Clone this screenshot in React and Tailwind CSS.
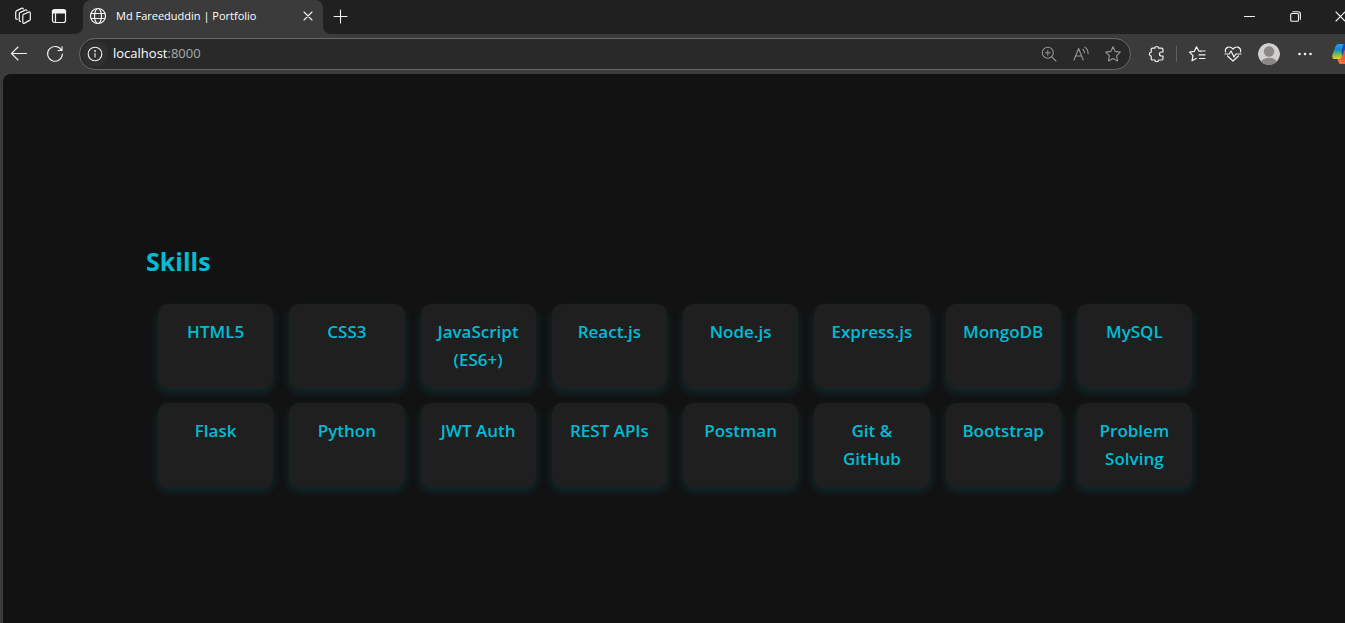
import React from "react";

const skills = [
  "HTML5", "CSS3", "JavaScript (ES6+)", "React.js", "Node.js", "Express.js", "MongoDB", "MySQL",
  "Flask", "Python", "JWT Auth", "REST APIs", "Postman", "Git & GitHub", "Bootstrap", "Problem Solving",
];

function Icon({ size = 20, stroke = 1.1, children }) {
  return (
    <svg width={size} height={size} viewBox={`0 0 ${size} ${size}`} fill="none" stroke="currentColor"
      strokeWidth={stroke} strokeLinecap="round" strokeLinejoin="round" aria-hidden="true" className="shrink-0">
      {children}
    </svg>
  );
}

function IconButton({ label, className = "", children }) {
  return (
    <button type="button" aria-label={label} className={`flex h-8 shrink-0 items-center justify-center ${className}`}>
      {children}
    </button>
  );
}

function TitleBar() {
  return (
    <header className="flex h-[34px] items-stretch bg-[#202020] text-[#f2f2f2]">
      <IconButton label="Workspaces" className="w-9 pl-2.5">
        <Icon stroke={1.2}>
          <path d="M10.300 8.500 15.700 6.100Q17.300 5.500 17.300 7.200v6q0 .8-.8 1.200l-4.900 2.700q-1.800.8-1.800-.9V9.700q0-.9.500-1.200" />
          <path d="M7.500 15.300Q6.300 15.400 6.300 14V7.900q0-.9.700-1.300l5.200-2.500q1.400-.6 1.800.6" />
          <path d="M4.300 13.200Q2.700 13.400 2.700 11.900V6.200q0-.9.700-1.300L8.500 2.400q1.400-.6 1.900.5" />
        </Icon>
      </IconButton>
      <IconButton label="Tab actions" className="w-[46px]">
        <Icon stroke={1.2}>
          <rect x="3.500" y="3.500" width="13" height="13" rx="2" />
          <path d="M3.500 4.500h13v2.500h-13z" fill="currentColor" />
          <path d="M6.500 7.500v9" />
        </Icon>
      </IconButton>
      <div className="relative ml-px flex h-8 w-60 items-center self-start rounded-t-lg bg-[#3b3b3b] pl-[5px] pr-[5px] shadow-[0_2px_0_#3b3b3b]">
        <svg className="absolute -bottom-0.5 -left-2" width="8" height="8" viewBox="0 0 8 8" aria-hidden="true">
          <path d="M8 0v8H0a8 8 0 0 0 8-8" fill="#3b3b3b" />
        </svg>
        <svg className="absolute -bottom-0.5 -right-2" width="8" height="8" viewBox="0 0 8 8" aria-hidden="true">
          <path d="M0 0v8h8a8 8 0 0 1-8-8" fill="#3b3b3b" />
        </svg>
        <Icon stroke={1.2}>
          <circle cx="10" cy="10" r="7.500" />
          <ellipse cx="10" cy="10" rx="3.500" ry="7.500" />
          <path d="M3.200 7.500h13.600M3.200 12.500h13.600" />
        </Icon>
        <span className="ml-2 flex-1 whitespace-nowrap text-[11px] text-white">Md Fareeduddin | Portfolio</span>
        <IconButton label="Close tab" className="w-5">
          <Icon size={10}><path d="M1 1l8 8M9 1 1 9" /></Icon>
        </IconButton>
      </div>
      <IconButton label="New tab" className="w-[34px]">
        <Icon size={15}><path d="M7.500 1v13M1 7.500h13" /></Icon>
      </IconButton>
      <div className="ml-auto flex overflow-hidden">
        <IconButton label="Minimize" className="w-[46px]">
          <Icon size={11} stroke={1}><path d="M.5 5.500h10" /></Icon>
        </IconButton>
        <IconButton label="Restore" className="w-[46px]">
          <Icon size={11} stroke={1.1}>
            <rect x=".7" y="2.500" width="7.800" height="7.800" rx="1" />
            <path d="M2.800.7h5.400q2.200 0 2.200 2.200v5.300" />
          </Icon>
        </IconButton>
        <IconButton label="Close window" className="-mr-[17px] w-11">
          <Icon size={11}><path d="M1 1l9 9M10 1l-9 9" /></Icon>
        </IconButton>
      </div>
    </header>
  );
}

function Toolbar() {
  return (
    <nav aria-label="Browser toolbar" className="flex h-10 items-center overflow-hidden bg-[#3b3b3b] pl-px text-[#f2f2f2]">
      <IconButton label="Back" className="w-9">
        <Icon><path d="M17.500 9.500H2.500M9 3 2.500 9.500 9 16" /></Icon>
      </IconButton>
      <IconButton label="Refresh" className="w-9">
        <Icon><path d="M16.600 6.500A7.400 7.400 0 1 0 17.400 10M17 2.500v4h-4" /></Icon>
      </IconButton>
      <div className="ml-1.5 flex h-8 flex-1 items-center rounded-full border border-[#686868] bg-[#292929] pl-0.5 pr-px">
        <IconButton label="Site information" className="w-[26px] rounded-full">
          <span className="flex size-[26px] items-center justify-center rounded-full bg-[#303030]">
            <Icon size={16} stroke={1.100}>
              <circle cx="8" cy="8" r="6.800" />
              <path d="M8 7.500v3.500" />
              <circle cx="8" cy="5" r=".4" />
            </Icon>
          </span>
        </IconButton>
        <a href="http://localhost:8000" className="ml-[5px] flex-1 text-[13px] text-white">
          localhost<span className="text-[#ababab]">:8000</span>
        </a>
        <div className="flex text-[#969696]">
          <IconButton label="Zoom" className="w-8">
            <Icon size={16}>
              <circle cx="6.800" cy="6.800" r="5.500" />
              <path d="M10.800 10.800 15 15M6.800 4.500v4.600M4.500 6.800h4.600" />
            </Icon>
          </IconButton>
          <IconButton label="Read aloud" className="w-8">
            <Icon size={16}>
              <path d="M1 14 5.600 2.500 10.200 14M2.600 10h6" />
              <path d="M9.800 3.300Q11.500 4.600 11.500 6.700M11.800 1.100Q15.400 3.400 15 7.600" />
            </Icon>
          </IconButton>
          <IconButton label="Add to favorites" className="w-8">
            <Icon size={18}>
              <path d="M9 1.800 11.200 6.400 16.300 7.100 12.600 10.700 13.500 15.900 9 13.400 4.500 15.900 5.400 10.700 1.700 7.100 6.800 6.400Z" />
            </Icon>
          </IconButton>
        </div>
      </div>
      <IconButton label="Extensions" className="ml-2 w-9">
        <Icon size={18} stroke={1.200}>
          <path d="M4.500 3.200H6.900C6.900.9 10.600.9 10.600 3.200H13.500Q15 3.200 15 4.700V7H13.500C10.800 7 10.800 11 13.500 11H15V13.500Q15 15 13.500 15H10.600C10.600 17.300 6.900 17.300 6.900 15H4.500Q3.200 15 3.200 13.700V11C.9 11 .9 7.200 3.200 7.200V4.500Q3.200 3.200 4.500 3.200Z" />
        </Icon>
      </IconButton>
      <span className="ml-px mr-0.5 h-4 w-px bg-[#606060]" />
      <IconButton label="Favorites" className="w-9">
        <Icon size={18} stroke={1.200}>
          <path d="M12.500 6.300 10.800 6 8.500 1.800 6.300 6.400 1.500 7.100 5 10.700 4 15.800 8.200 13.400M11.800 6H17M11 9.800H17M11.500 13.500H17" />
        </Icon>
      </IconButton>
      <IconButton label="Browser essentials" className="w-9">
        <Icon size={18} stroke={1.200}>
          <path d="M1.500 7C.6 2.600 5.600.1 9 4 12.400.1 17.400 2.600 16.500 7M3.500 11 9 16l5.500-5M1 9h4.200L7 6l3 6 1.800-3H17" />
        </Icon>
      </IconButton>
      <IconButton label="Profile" className="w-9">
        <svg width="22" height="22" viewBox="0 0 22 22" aria-hidden="true">
          <defs><clipPath id="avatar"><circle cx="11" cy="11" r="11" /></clipPath></defs>
          <g clipPath="url(#avatar)">
            <circle cx="11" cy="11" r="11" fill="#d2d0ce" />
            <circle cx="11" cy="8.500" r="5.200" fill="#8a8886" />
            <ellipse cx="11" cy="20" rx="8" ry="5.300" fill="#8a8886" />
          </g>
        </svg>
      </IconButton>
      <IconButton label="Settings and more" className="w-9">
        <svg width="16" height="4" viewBox="0 0 16 4" fill="currentColor" aria-hidden="true">
          <circle cx="2.500" cy="2" r="1.300" /><circle cx="8" cy="2" r="1.300" /><circle cx="13.500" cy="2" r="1.300" />
        </svg>
      </IconButton>
      <IconButton label="Copilot" className="-mr-2.5 ml-2 w-6">
        <svg width="24" height="22" viewBox="0 0 24 22" className="shrink-0" aria-hidden="true">
          <defs>
            <linearGradient id="cool" x1="0" y1="0" x2="0" y2="1">
              <stop offset="0" stopColor="#22a5f2" /><stop offset=".35" stopColor="#1685d8" />
              <stop offset=".65" stopColor="#5dba55" /><stop offset="1" stopColor="#f4d01c" />
            </linearGradient>
            <linearGradient id="warm" x1="0" y1="1" x2="1" y2="0">
              <stop offset="0" stopColor="#ff8a3c" /><stop offset=".4" stopColor="#f4523d" /><stop offset="1" stopColor="#b94fd8" />
            </linearGradient>
          </defs>
          <path d="M17 6h2.500Q24 6 23 10l-2 7q-1.200 4-5 4H10q-2 0-2.700-2.300L6.500 16H9q1.500 0 2-2l2-6Q14 6 17 6Z" fill="url(#warm)" />
          <path d="M8 1H15q2 0 2.600 2.300L18.300 6H16q-2.500 0-3.300 2.600L11 14q-.6 2-2.500 2H4Q.300 16 1.500 11.500L4 4.500Q5 1 8 1Z" fill="url(#cool)" />
          <path d="M12.500 1H15q2 0 2.600 2.300L18.300 6H16q-2.500 0-3.300 2.600L11.200 13 10.500 8Z" fill="#1b4aa8" />
        </svg>
      </IconButton>
    </nav>
  );
}

export default function App() {
  return (
    <div className="flex min-h-screen flex-col overflow-hidden bg-[#3b3b3b] font-['Open_Sans','Noto_Sans',sans-serif]">
      <TitleBar />
      <Toolbar />
      <main className="ml-[3px] flex-1 rounded-tl-lg bg-[#121212] pb-32 pl-0.5 pt-[167px] text-[#00bcd4]">
        <section className="mx-auto w-full max-w-[1058px]">
          <h2 className="text-[25px] font-bold leading-10">Skills</h2>
          <ul className="mt-[23px] grid grid-cols-8 gap-x-4 gap-y-[15px] px-3">
            {skills.map((skill) => (
              <li key={skill}
                className="rounded-[10px] bg-[#1f1f1f] p-3.5 text-center text-[17px] font-semibold leading-7 shadow-[0_4px_10px_rgba(0,188,212,0.15)]">
                {skill}
              </li>
            ))}
          </ul>
        </section>
      </main>
    </div>
  );
}
